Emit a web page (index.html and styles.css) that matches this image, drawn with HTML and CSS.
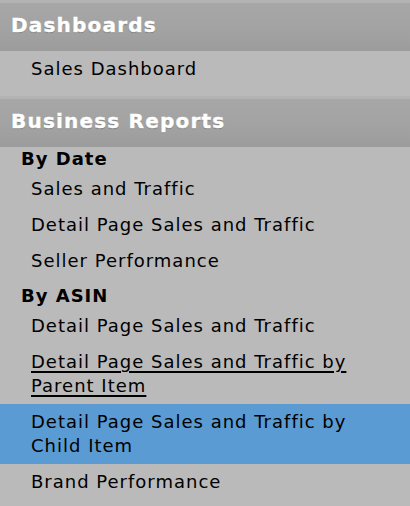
FILE: index.html
```html
<!DOCTYPE html>
<html lang="en">
<head>
    <meta charset="UTF-8">
    <meta name="viewport" content="width=device-width, initial-scale=1.0">
    <title>Reports</title>
    <link rel="stylesheet" href="styles.css">
</head>
<body>
    <div class="nav">
        <div class="section">
            <h2 class="section-title">Dashboards</h2>
            <ul class="links">
                <li><a href="#">Sales Dashboard</a></li>
            </ul>
        </div>
        <div class="section">
            <h2 class="section-title">Business Reports</h2>
            <div class="group">
                <h3 class="group-title">By Date</h3>
                <ul class="links">
                    <li><a href="#">Sales and Traffic</a></li>
                    <li><a href="#">Detail Page Sales and Traffic</a></li>
                    <li><a href="#">Seller Performance</a></li>
                </ul>
            </div>
            <div class="group">
                <h3 class="group-title">By ASIN</h3>
                <ul class="links">
                    <li><a href="#">Detail Page Sales and Traffic</a></li>
                    <li><a href="#" class="hover">Detail Page Sales and Traffic by Parent Item</a></li>
                    <li class="selected"><a href="#">Detail Page Sales and Traffic by Child Item</a></li>
                    <li><a href="#">Brand Performance</a></li>
                </ul>
            </div>
        </div>
    </div>
</body>
</html>
```

FILE: styles.css
```css
body {
    margin: 0;
    background: #bababa;
    font-family: 'DejaVu Sans', Verdana, sans-serif;
    color: #000;
}
.nav {
    width: 410px;
}
.section {
    border-top: 3px solid #b3b3b3;
    padding-bottom: 9px;
}
.section-title {
    margin: 0;
    height: 48px;
    line-height: 45px;
    padding-left: 11px;
    font-size: 20px;
    letter-spacing: 1.2px;
    font-weight: bold;
    color: #fff;
    -webkit-text-stroke: 0.4px #fff;
    text-shadow: 0 1px 1px rgba(0, 0, 0, 0.25);
    background: linear-gradient(#a7a7a7, #a2a2a2 60%, #9c9c9c);
}
.group + .group {
    margin-top: 5px;
}
.group-title {
    margin: 0;
    padding-left: 21px;
    font-size: 18px;
    letter-spacing: 1px;
    line-height: 24px;
    font-weight: bold;
}
.links {
    list-style: none;
    margin: 0;
    padding: 0;
}
.links li {
    padding: 6px 20px 6px 31px;
    font-size: 18px;
    letter-spacing: 1px;
    line-height: 24px;
}
.links a {
    color: #000;
    text-decoration: none;
}
.links a.hover {
    text-decoration: underline;
    text-decoration-thickness: 2px;
    text-underline-offset: 3px;
}
.links li.selected {
    background: #5a9bd3;
}
```
